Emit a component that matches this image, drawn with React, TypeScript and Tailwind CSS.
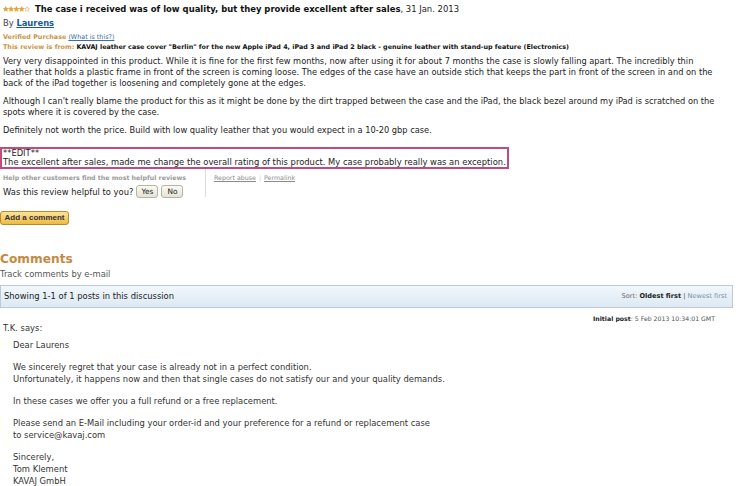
import { Fragment } from 'react';

const Stars = ({ filled = 4 }: { filled?: number }) => {
  const pts = (cx: number) => {
    const out: string[] = [];
    for (let i = 0; i < 10; i++) {
      const r = i % 2 === 0 ? 2.6 : 1.1;
      const a = (Math.PI / 5) * i - Math.PI / 2;
      out.push(`${(cx + r * Math.cos(a)).toFixed(2)},${(3.2 + r * Math.sin(a)).toFixed(2)}`);
    }
    return out.join(' ');
  };
  return (
    <svg width="27" height="7" viewBox="0 0 27 7" className="shrink-0">
      {[0, 1, 2, 3, 4].map((i) => (
        <polygon
          key={i}
          points={pts(2.8 + i * 5.3)}
          fill={i < filled ? '#f3a52d' : '#fff'}
          stroke={i < filled ? '#d98b17' : '#c9a25a'}
          strokeWidth="0.5"
        />
      ))}
    </svg>
  );
};

const reviewParas = [
  'Very very disappointed in this product. While it is fine for the first few months, now after using it for about 7 months the case is slowly falling apart. The incredibly thin leather that holds a plastic frame in front of the screen is coming loose. The edges of the case have an outside stich that keeps the part in front of the screen in and on the back of the iPad together is loosening and completely gone at the edges.',
  "Although I can't really blame the product for this as it might be done by the dirt trapped between the case and the iPad, the black bezel around my iPad is scratched on the spots where it is covered by the case.",
  'Definitely not worth the price. Build with low quality leather that you would expect in a 10-20 gbp case.',
];

const letter = [
  ['Dear Laurens'],
  [
    'We sincerely regret that your case is already not in a perfect condition.',
    'Unfortunately, it happens now and then that single cases do not satisfy our and your quality demands.',
  ],
  ['In these cases we offer you a full refund or a free replacement.'],
  [
    'Please send an E-Mail including your order-id and your preference for a refund or replacement case',
    'to service@kavaj.com',
  ],
  ['Sincerely,', 'Tom Klement', 'KAVAJ GmbH'],
];

export default function App() {
  return (
    <div className="w-[753px] h-[486px] overflow-hidden bg-white font-['DejaVu_Sans',Verdana,sans-serif] text-[#222]">
      <div className="pl-[3px] pt-[3px]">
        <div className="flex items-center gap-[5px] leading-[12px]">
          <Stars />
          <div className="text-[8.45px]">
            <b className="text-[#111]">
              The case i received was of low quality, but they provide excellent after sales
            </b>
            , 31 Jan. 2013
          </div>
        </div>
        <div className="mt-[2px] text-[8.4px] leading-[12px] text-[#444]">
          By <span className="font-bold text-[#1a5a9a] underline">Laurens</span>
        </div>
        <div className="mt-[3px] text-[6.4px] leading-[10px]">
          <span className="font-bold text-[#c99645]">Verified Purchase</span>{' '}
          <span className="text-[#3a6ea5] underline">(What is this?)</span>
        </div>
        <div className="text-[6.4px] leading-[10px] font-bold">
          <span className="text-[#c99645]">This review is from: </span>
          <span className="text-[#111]">
            KAVAJ leather case cover "Berlin" for the new Apple iPad 4, iPad 3 and iPad 2 black - genuine leather with stand-up feature (Electronics)
          </span>
        </div>
        <div className="mt-[4px] w-[716px] text-[8.25px] leading-[11px] flex flex-col gap-[7px]">
          {reviewParas.map((p, i) => (
            <p key={i}>{p}</p>
          ))}
        </div>
      </div>

      <div className="mt-[11px] w-[509px] border-2 border-[#c4497c] px-[1px] text-[8.4px] leading-[9px]">
        <p>**EDIT**</p>
        <p>The excellent after sales, made me change the overall rating of this product. My case probably really was an exception.</p>
      </div>

      <div className="mt-[4px] pl-[3px] flex">
        <div className="w-[202px] pr-[8px]">
          <div className="text-[6.3px] leading-[10px] font-bold text-[#9a9a9a]">
            Help other customers find the most helpful reviews
          </div>
          <div className="mt-[2px] flex items-center text-[8.4px] leading-[12px]">
            <span>Was this review helpful to you?</span>
            <span className="ml-[3px] rounded-[3px] border border-[#b5b5a5] bg-gradient-to-b from-[#fbfbf3] to-[#e3e3d6] px-[4px] text-[7.4px] leading-[11px]">
              Yes
            </span>
            <span className="ml-[3px] rounded-[3px] border border-[#b5b5a5] bg-gradient-to-b from-[#fbfbf3] to-[#e3e3d6] px-[5px] text-[7.4px] leading-[11px]">
              No
            </span>
          </div>
        </div>
        <div className="-mt-[4px] h-[28px] border-l border-[#dcdcdc]" />
        <div className="pl-[8px] text-[6.3px] leading-[10px] text-[#8a8a8a]">
          <span className="underline">Report abuse</span>
          <span className="mx-[3px] text-[#ccc]">|</span>
          <span className="underline">Permalink</span>
        </div>
      </div>

      <div className="mt-[13px] inline-flex h-[14px] w-[69px] items-center justify-center rounded-[3px] border border-[#b88a2c] bg-gradient-to-b from-[#fbe39a] to-[#eeb93e] font-['Liberation_Sans_Narrow','Liberation_Sans',sans-serif] text-[8px] font-bold text-[#333]">
        Add a comment
      </div>

      <div className="mt-[25px] text-[12.2px] leading-[14px] font-bold text-[#c48a3f]">Comments</div>
      <div className="mt-[3px] text-[8.4px] leading-[11px] text-[#555]">Track comments by e-mail</div>

      <div className="mt-[5px] w-[733px] h-[23px] flex items-center justify-between border border-[#bccbd8] bg-gradient-to-b from-[#f1f7fc] to-[#dde9f3] pl-[3px] pr-[5px]">
        <span className="text-[8.4px] text-[#222]">Showing 1-1 of 1 posts in this discussion</span>
        <span className="text-[6.6px] text-[#666]">
          Sort: <b className="text-[#222]">Oldest first</b> <span className="text-[#444]">|</span>{' '}
          <span className="text-[#7a8ca0]">Newest first</span>
        </span>
      </div>

      <div className="mt-[6px] w-[715px] text-right text-[6.2px] leading-[9px] text-[#555]">
        <b className="text-[#222]">Initial post</b>: 5 Feb 2013 10:34:01 GMT
      </div>
      <div className="pl-[3px] text-[8.4px] leading-[11px] text-[#333]">T.K. says:</div>

      <div className="mt-[5px] pl-[13px] text-[8.4px] leading-[12px] text-[#333] flex flex-col gap-[10px]">
        {letter.map((lines, i) => (
          <p key={i}>
            {lines.map((l, j) => (
              <Fragment key={j}>
                {j > 0 && <br />}
                {l}
              </Fragment>
            ))}
          </p>
        ))}
      </div>
    </div>
  );
}
